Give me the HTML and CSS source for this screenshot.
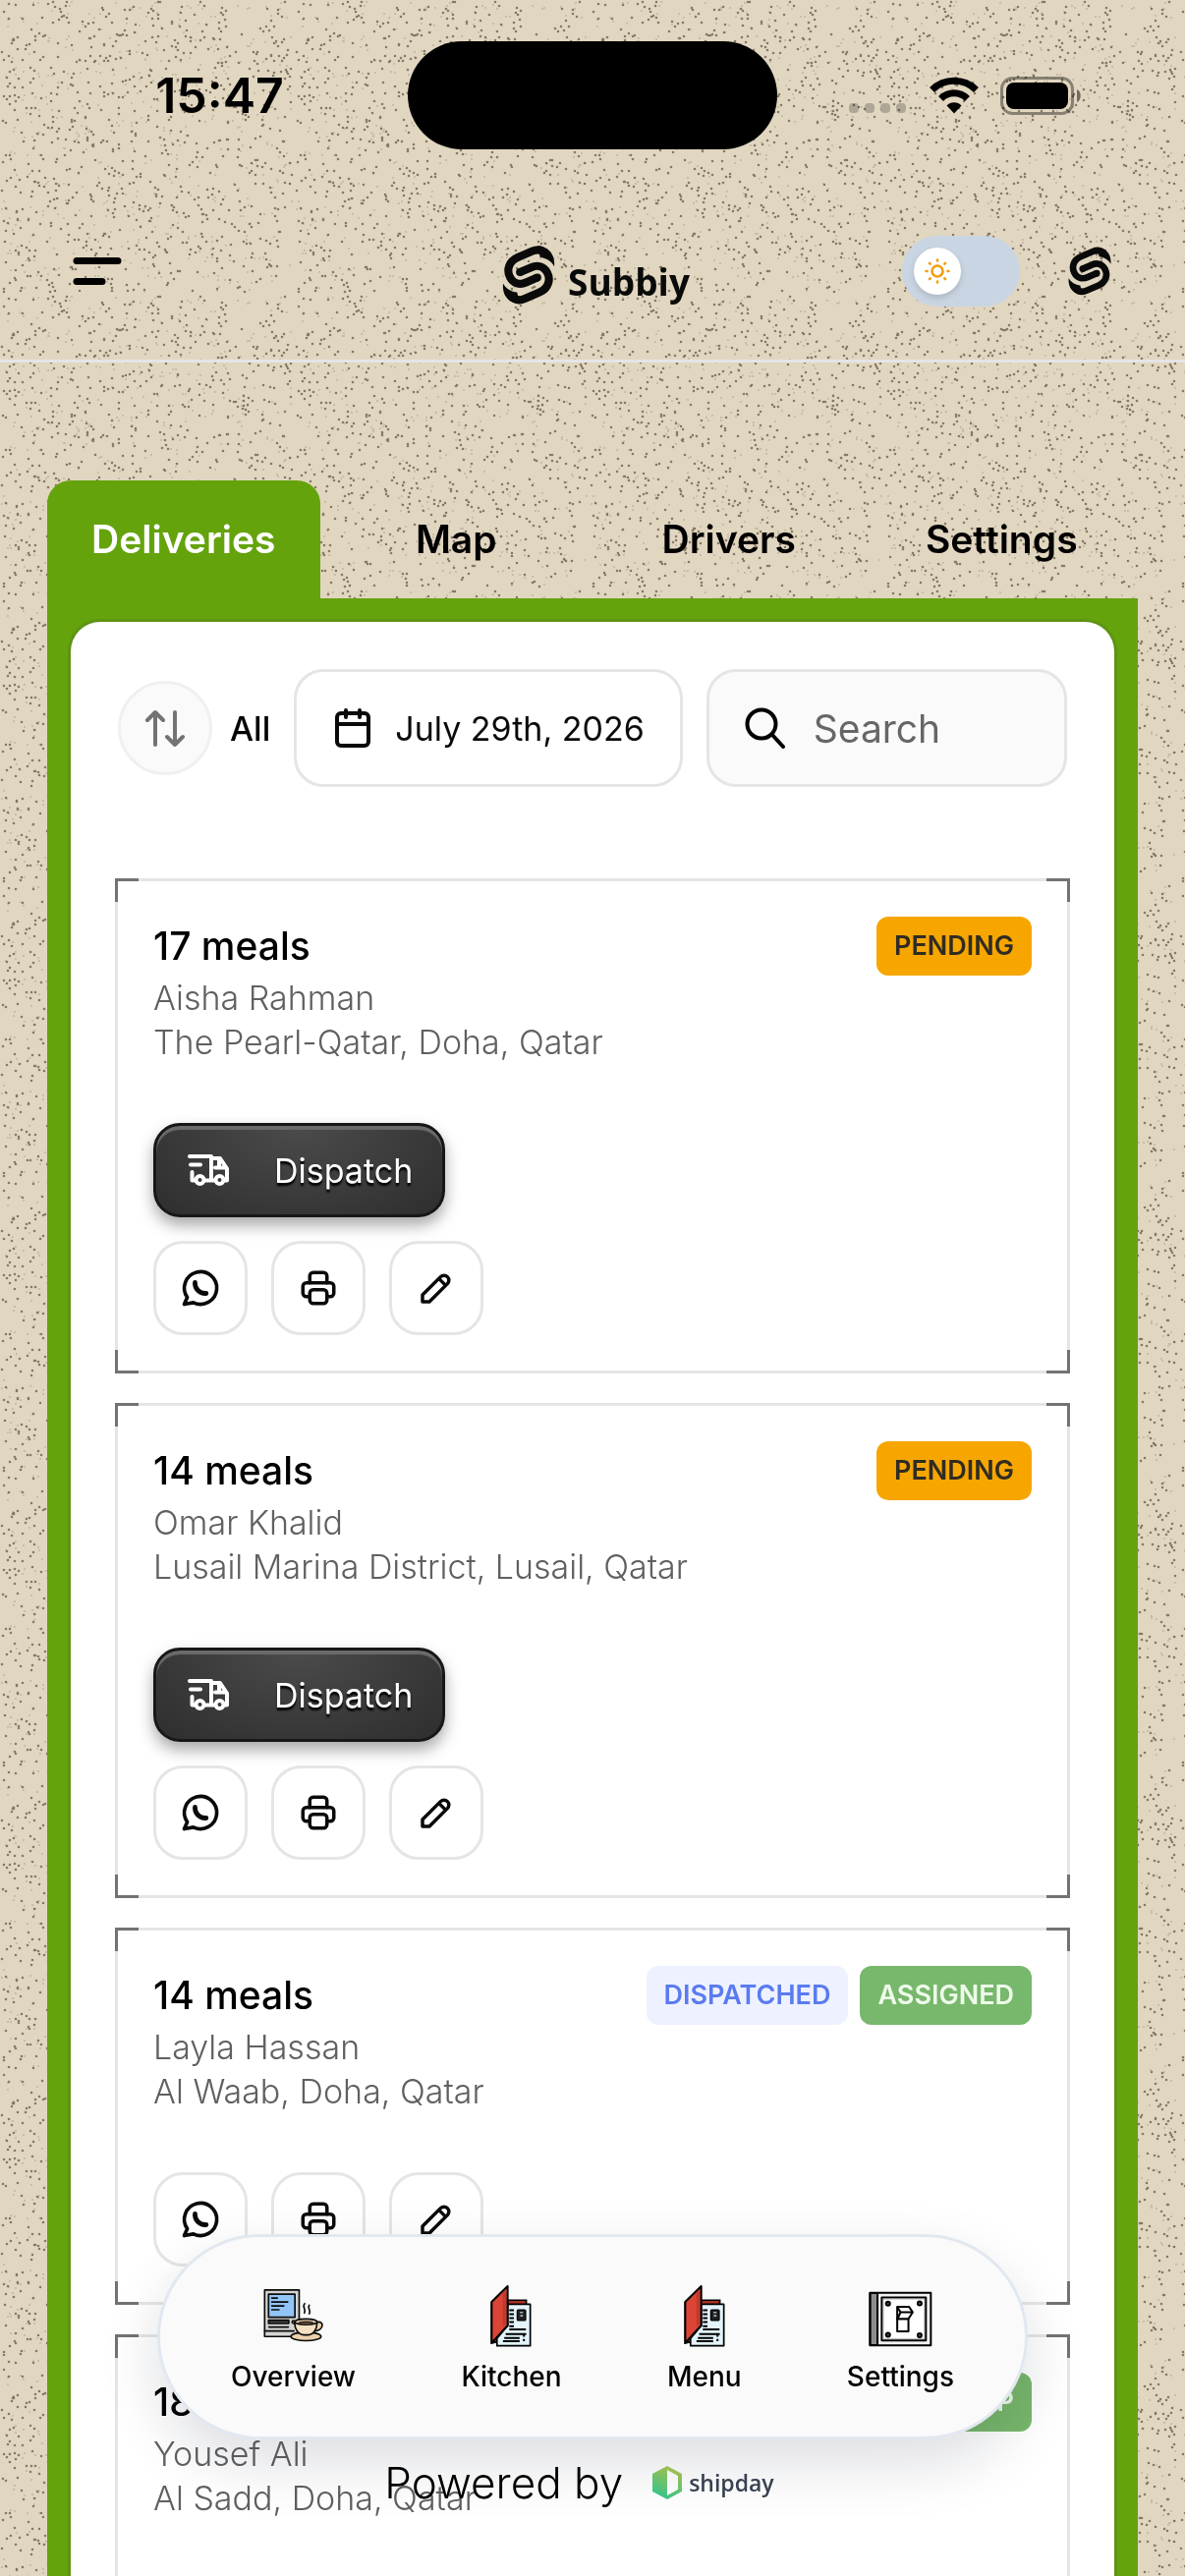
FILE: index.html
```html
<!DOCTYPE html>
<html lang="en">
<head>
<meta charset="utf-8">
<meta name="viewport" content="width=device-width, initial-scale=1">
<title>Subbiy – Deliveries</title>
<link rel="stylesheet" href="styles.css">
</head>
<body>
<svg class="sprite" width="0" height="0" aria-hidden="true">
  <defs>
    <symbol id="logo" viewBox="26 56 172 190">
      <g fill="#0a0a0a" stroke="#0a0a0a">
        <g id="logo-half">
          <path fill="none" stroke-width="25" stroke-linejoin="round" d="M167 84C155 72 140 69 124 76L78 96C50 108 42 136 54 158C64 177 84 183 104 174L139 159"/>
          <circle cx="139" cy="159" r="12.500" stroke="none"/>
          <path stroke="none" d="M140 60C172 62 196 84 192 124C184 108 166 98 148 96z"/>
        </g>
        <use href="#logo-half" transform="rotate(180 112 150.500)"/>
      </g>
    </symbol>
    <symbol id="i-whatsapp" viewBox="0 0 24 24">
      <path d="M3 21l1.700-3.800a9 9 0 1 1 3.400 2.900L3 21" />
      <path d="M9 9.500C9 12.500 11.500 15 14.600 15M9 9v1.200M14.600 15h.600" stroke-width="2.600"/>
    </symbol>
    <symbol id="i-printer" viewBox="0 0 24 24">
      <path d="M17 17h2a2 2 0 0 0 2-2v-4a2 2 0 0 0-2-2H5a2 2 0 0 0-2 2v4a2 2 0 0 0 2 2h2"/>
      <path d="M17 9V5a2 2 0 0 0-2-2H9a2 2 0 0 0-2 2v4"/>
      <rect x="7" y="13" width="10" height="8" rx="2"/>
    </symbol>
    <symbol id="i-pencil" viewBox="0 0 24 24">
      <path d="M4 20h4L18.500 9.500a2.828 2.828 0 1 0-4-4L4 16v4M13.500 6.500l4 4"/>
    </symbol>
    <symbol id="i-truck" viewBox="0 0 43 32">
      <path d="M2 2h22v24.500M24 4h9l7 10.500v12h-2.500M27.500 26.500H17M8 26.500H4.500V18M3 10.500h10M28 13.500h10"/>
      <circle cx="12.500" cy="26" r="4"/><circle cx="32.500" cy="26" r="4"/>
      <path d="M32 4v8"/>
    </symbol>
    <symbol id="i-book" viewBox="0 0 124 186">
      <path d="M40 45h68v20H40z" fill="#a83228" stroke="#000" stroke-width="5"/>
      <path d="M4 50v124l18-4z" fill="#a83228" stroke="#000" stroke-width="5"/>
      <path d="M52 57h68v125H20v-22l32-38z" fill="#e3f4fa" stroke="#000" stroke-width="5" stroke-linejoin="round"/>
      <path d="M4 50L52 3v118L4 174z" fill="#da4535" stroke="#000" stroke-width="6" stroke-linejoin="round"/>
      <path d="M46 14v102l-8 9V22z" fill="#bd3a2c"/>
      <path d="M57 75h14M57 87h14M57 99h14M57 111h14M57 123h14M57 133h50M46 147h62M42 159h46M38 168h50M101 147v8M101 162v6" fill="none" stroke="#000" stroke-width="6"/>
      <rect x="81" y="74" width="25" height="32" rx="3" fill="#222" stroke="#000" stroke-width="4"/>
      <path d="M89 82h9M90 92h8" stroke="#9fb9c4" stroke-width="5"/>
    </symbol>
    <symbol id="i-computer" viewBox="115 70 187 164">
      <g stroke="#0a0a0a" stroke-width="5" stroke-linejoin="round" stroke-linecap="round">
        <rect x="119" y="73" width="106" height="143" fill="#d3d3d1"/>
        <rect x="131" y="86" width="81" height="71" fill="#92c5f7"/>
        <path d="M119 199h90M132 187h60" fill="none"/>
        <rect x="131" y="166" width="62" height="10" fill="#444"/>
        <path d="M141 98h17M141 110h49M141 122h37M141 134h22" fill="none"/>
        <ellipse cx="246" cy="216" rx="46" ry="13" fill="#edd0ac"/>
        <path d="M280 172c22-6 22 24-6 27" fill="#edd0ac"/>
        <path d="M212 170c-8-8-14 6-2 6" fill="#d3d3d1"/>
        <path d="M211 172c0 22 12 39 28 39h14c16 0 27-17 27-39" fill="#f6e0c2"/>
        <ellipse cx="246" cy="171" rx="34" ry="9" fill="#f6e0c2"/>
        <ellipse cx="246" cy="173" rx="24" ry="5" fill="#4a3424" stroke="none"/>
        <path d="M242 115c-10 10 6 16-1 29M256 120c-8 9 7 15 0 26" fill="none"/>
      </g>
    </symbol>
    <symbol id="i-switch" viewBox="858 246 194 170">
      <g stroke="#000" stroke-width="6" stroke-linejoin="round">
        <rect x="862" y="251" width="185" height="160" fill="#f2f2f2"/>
        <path d="M863 252h22v158h-22z" fill="#8d8d8d"/>
        <rect x="898" y="265" width="134" height="131" fill="#fff"/>
        <rect x="903" y="270" width="124" height="121" fill="none" stroke="#999" stroke-width="2"/>
        <circle cx="917" cy="284" r="6" fill="#555"/><circle cx="1013" cy="283" r="6" fill="#555"/>
        <circle cx="917" cy="379" r="6" fill="#555"/><circle cx="1013" cy="380" r="6" fill="#555"/>
        <path d="M945 330h34v38h-34z" fill="#fff"/>
        <path d="M945 330v-36h36l11 16-13 20z" fill="#fff"/>
        <path d="M945 294l10 16h37M955 310l-9 20" fill="none"/>
      </g>
    </symbol>
  </defs>
</svg>
<svg class="speckle" aria-hidden="true">
  <defs><pattern id="grain" width="300" height="300" patternUnits="userSpaceOnUse"></pattern></defs>
  <rect width="100%" height="100%" fill="url(#grain)"/>
</svg>

<div class="app">
  <div class="status">
    <div class="status-time">15:47</div>
    <div class="island"></div>
    <div class="status-icons">
      <svg width="60" height="38" viewBox="0 0 60 38" aria-hidden="true">
        <g fill="#000" fill-opacity=".22"><rect x="0" y="27" width="10" height="10" rx="4"/><rect x="16" y="27" width="10" height="10" rx="4"/><rect x="32" y="27" width="10" height="10" rx="4"/><rect x="48" y="27" width="10" height="10" rx="4"/></g>
      </svg>
      <svg width="50" height="38" viewBox="0 0 50 38" aria-hidden="true">
        <g fill="none" stroke="#000" stroke-width="7">
          <path d="M2.500 13.500a32 32 0 0 1 45 0"/><path d="M11.500 22.500a19 19 0 0 1 27 0"/>
        </g>
        <path d="M25 37.500l-7.500-8a10.500 10.500 0 0 1 15 0z"/>
      </svg>
      <svg width="83" height="39" viewBox="0 0 83 39" aria-hidden="true">
        <rect x="1.500" y="1.500" width="72" height="36" rx="11" fill="none" stroke="#000" stroke-opacity=".4" stroke-width="3"/>
        <rect x="6" y="6" width="63" height="27" rx="8"/>
        <path d="M78 13c5 2 5 11 0 13z" fill-opacity=".5"/>
      </svg>
    </div>
  </div>

  <header class="topbar">
    <button class="menu-btn" type="button" aria-label="Menu">
      <svg width="50" height="28" viewBox="0 0 50 28"><path d="M4 3.500h42M4 24.500h26" stroke="#000" stroke-width="7" stroke-linecap="round"/></svg>
    </button>
    <a class="brand" href="#home"><svg width="56" height="62"><use href="#logo"/></svg><span>Subbiy</span></a>
    <div class="topbar-right">
      <label class="theme">
        <input type="checkbox" aria-label="Dark mode">
        <span class="thumb">
          <svg width="26" height="26" viewBox="0 0 26 26" fill="none" stroke="#f59e0b" stroke-width="2.600" stroke-linecap="round"><circle cx="13" cy="13" r="5.500"/><path d="M13 1.500v1M13 23.500v1M1.500 13h1M23.500 13h1M5 5l.700.700M20.300 20.300l.700.700M5 21l.700-.700M20.300 5.700l.700-.700"/></svg>
        </span>
      </label>
      <svg width="46" height="52" aria-hidden="true"><use href="#logo"/></svg>
    </div>
  </header>

  <main class="main">
    <nav class="tabs">
      <a class="tab active" href="#deliveries">Deliveries</a>
      <a class="tab" href="#map">Map</a>
      <a class="tab" href="#drivers">Drivers</a>
      <a class="tab" href="#tab-settings">Settings</a>
    </nav>
    <section class="frame">
      <div class="panel">
        <div class="toolbar">
          <button class="sort" type="button" aria-label="Sort">
            <svg width="42" height="38" viewBox="0 0 42 38" fill="none" stroke="#737373" stroke-width="4" stroke-linecap="round" stroke-linejoin="round"><path d="M11 36V3M3 11l8-8 8 8M31 3v33M23 28l8 8 8-8"/></svg>
          </button>
          <span class="all">All</span>
          <button class="date" type="button">
            <svg width="36" height="40" viewBox="0 0 36 40" fill="none" stroke="#0a0a0a" stroke-width="4" stroke-linecap="round" stroke-linejoin="round"><rect x="2" y="5" width="32" height="33" rx="4"/><path d="M2 16h32M11 2v7M25 2v7"/></svg>
            <span>July 29th, 2026</span>
          </button>
          <label class="search">
            <svg width="42" height="42" viewBox="0 0 42 42" fill="none" stroke="#000" stroke-width="4" stroke-linecap="round"><circle cx="17" cy="17" r="14.500"/><path d="M28 28l11 12"/></svg>
            <input type="text" placeholder="Search" aria-label="Search">
          </label>
        </div>

        <div class="cards">
          <article class="card">
            <div class="corners"></div>
            <div class="card-head"><h2>17 meals</h2><div class="badges"><span class="badge pending">PENDING</span></div></div>
            <p>Aisha Rahman</p>
            <p>The Pearl-Qatar, Doha, Qatar</p>
            <div class="actions">
              <button class="dispatch" type="button"><svg width="43" height="32"><use href="#i-truck"/></svg><span>Dispatch</span></button>
              <div class="icon-row">
                <button class="icon-btn" type="button" aria-label="WhatsApp"><svg width="44" height="44"><use href="#i-whatsapp"/></svg></button>
                <button class="icon-btn" type="button" aria-label="Print"><svg width="42" height="42"><use href="#i-printer"/></svg></button>
                <button class="icon-btn" type="button" aria-label="Edit"><svg width="42" height="42"><use href="#i-pencil"/></svg></button>
              </div>
            </div>
          </article>
          <article class="card">
            <div class="corners"></div>
            <div class="card-head"><h2>14 meals</h2><div class="badges"><span class="badge pending">PENDING</span></div></div>
            <p>Omar Khalid</p>
            <p>Lusail Marina District, Lusail, Qatar</p>
            <div class="actions">
              <button class="dispatch" type="button"><svg width="43" height="32"><use href="#i-truck"/></svg><span>Dispatch</span></button>
              <div class="icon-row">
                <button class="icon-btn" type="button" aria-label="WhatsApp"><svg width="44" height="44"><use href="#i-whatsapp"/></svg></button>
                <button class="icon-btn" type="button" aria-label="Print"><svg width="42" height="42"><use href="#i-printer"/></svg></button>
                <button class="icon-btn" type="button" aria-label="Edit"><svg width="42" height="42"><use href="#i-pencil"/></svg></button>
              </div>
            </div>
          </article>
          <article class="card">
            <div class="corners"></div>
            <div class="card-head"><h2>14 meals</h2><div class="badges"><span class="badge dispatched">DISPATCHED</span><span class="badge done">ASSIGNED</span></div></div>
            <p>Layla Hassan</p>
            <p>Al Waab, Doha, Qatar</p>
            <div class="actions">
              <div class="icon-row">
                <button class="icon-btn" type="button" aria-label="WhatsApp"><svg width="44" height="44"><use href="#i-whatsapp"/></svg></button>
                <button class="icon-btn" type="button" aria-label="Print"><svg width="42" height="42"><use href="#i-printer"/></svg></button>
                <button class="icon-btn" type="button" aria-label="Edit"><svg width="42" height="42"><use href="#i-pencil"/></svg></button>
              </div>
            </div>
          </article>
          <article class="card">
            <div class="corners"></div>
            <div class="card-head"><h2>18 meals</h2><div class="badges"><span class="badge done">PICKED UP</span></div></div>
            <p>Yousef Ali</p>
            <p>Al Sadd, Doha, Qatar</p>
            <div class="actions">
              <div class="icon-row">
                <button class="icon-btn" type="button" aria-label="WhatsApp"><svg width="44" height="44"><use href="#i-whatsapp"/></svg></button>
                <button class="icon-btn" type="button" aria-label="Print"><svg width="42" height="42"><use href="#i-printer"/></svg></button>
                <button class="icon-btn" type="button" aria-label="Edit"><svg width="42" height="42"><use href="#i-pencil"/></svg></button>
              </div>
            </div>
          </article>
        </div>
      </div>
    </section>
  </main>
</div>

<div class="dock">
  <nav class="dock-nav">
    <a href="#overview"><svg width="72" height="72"><use href="#i-computer" x="5" y="7" width="62" height="56"/></svg><span>Overview</span></a>
    <a href="#kitchen"><svg width="72" height="72"><use href="#i-book" x="15" y="4" width="42" height="63"/></svg><span>Kitchen</span></a>
    <a href="#menu"><svg width="72" height="72"><use href="#i-book" x="15" y="4" width="42" height="63"/></svg><span>Menu</span></a>
    <a href="#settings"><svg width="72" height="72"><use href="#i-switch" x="4" y="10" width="65" height="57"/></svg><span>Settings</span></a>
  </nav>
  <div class="powered">
    <span>Powered by</span>
    <a class="shipday" href="#shipday">
      <svg width="30" height="34" viewBox="0 0 30 34">
        <defs><linearGradient id="ship" x1="0.700" y1="0" x2="0.300" y2="1"><stop offset="0" stop-color="#a9be4b"/><stop offset="1" stop-color="#31c48d"/></linearGradient></defs>
        <path fill="url(#ship)" fill-rule="evenodd" d="M15 0l15 8v18l-15 8L0 26V8zM15 4v26l11-6V10z"/>
      </svg>
      <span>shipday</span>
    </a>
  </div>
</div>
<script src="grain.js"></script>
</body>
</html>
```
FILE: styles.css
```css
* { box-sizing: border-box; }
body {
  margin: 0;
  background: #e1d6c0;
  color: #000;
  font-family: Inter, "Liberation Sans", sans-serif;
  font-size: 34px;
}
button, input { font: inherit; color: inherit; }
button { padding: 0; border: 0; background: none; }
a { color: inherit; text-decoration: none; }
svg { display: block; flex: none; }
h2, p { margin: 0; }
.sprite { position: absolute; }
.speckle { position: fixed; inset: 0; width: 100%; height: 100%; z-index: -1; }

.app { height: 100vh; overflow: hidden; display: flex; flex-direction: column; }

/* status bar */
.status {
  flex: none;
  display: grid;
  grid-template-columns: 1fr 376px 1fr;
  align-items: center;
  padding: 42px 32px 34px;
}
.status-time { text-align: center; font-size: 50px; font-weight: 600; line-height: 60px; }
.island { height: 110px; border-radius: 55px; background: #000; }
.status-icons { display: flex; justify-content: center; gap: 22px; }

/* header */
.topbar {
  flex: none;
  display: grid;
  grid-template-columns: 1fr auto 1fr;
  align-items: center;
  height: 183px;
  padding: 0 74px;
  border-bottom: 3px solid #e5e5e5;
}
.menu-btn { justify-self: start; }
.brand {
  display: flex;
  align-items: flex-end;
  gap: 12px;
  padding: 8px 0 0 6px;
  font: 700 37px/48px "Open Sans", sans-serif;
  color: #0a0a0a;
}
.topbar-right { display: flex; justify-content: flex-end; align-items: center; gap: 48px; }
.theme { position: relative; display: block; }
.theme input {
  display: block;
  appearance: none;
  width: 120px;
  height: 72px;
  margin: 0;
  border-radius: 36px;
  background: #cad5e3;
}
.thumb {
  position: absolute;
  top: 12px;
  left: 12px;
  display: grid;
  place-items: center;
  width: 48px;
  height: 48px;
  border-radius: 50%;
  background: #fff;
  box-shadow: 0 3px 6px rgba(0, 0, 0, .15);
}

/* tabs and panel */
.main { flex: 1; min-height: 0; display: flex; flex-direction: column; padding: 120px 48px 0; }
.tabs { flex: none; display: grid; grid-template-columns: repeat(4, 1fr); }
.tab {
  border-radius: 24px 24px 0 0;
  text-align: center;
  font-size: 39px;
  font-weight: 600;
  line-height: 120px;
}
.tab.active { background: #65a30d; color: #fff; }
.frame { flex: none; padding: 24px 24px 0; background: #65a30d; }
.panel {
  padding: 48px 45px;
  border-radius: 30px 30px 0 0;
  background: #fff;
  box-shadow: 0 0 0 3px rgba(60, 60, 60, .15);
}
.toolbar { display: flex; align-items: center; padding: 0 3px; margin-bottom: 93px; }
.sort {
  flex: none;
  display: grid;
  place-items: center;
  width: 96px;
  height: 96px;
  margin-right: 18px;
  border: 3px solid #f0f0f0;
  border-radius: 50%;
  background: #fafafa;
}
.all { margin-right: 24px; font-weight: 500; }
.date, .search {
  display: flex;
  align-items: center;
  height: 120px;
  border: 3px solid #e5e5e5;
  border-radius: 30px;
}
.date { gap: 25px; margin-right: 24px; padding: 0 36px 0 39px; background: #fff; white-space: nowrap; color: #0a0a0a; }
.search { flex: 1; min-width: 0; gap: 28px; padding: 0 24px 0 36px; background: #fafafa; }
.search input { flex: 1; min-width: 0; padding: 0; border: 0; outline: 0; background: none; font-size: 39px; }
.search input::placeholder { color: #666; opacity: 1; }

/* delivery cards */
.cards { display: grid; gap: 30px; }
.card { position: relative; padding: 36px; border: 3px solid #e5e5e5; }
.corners {
  position: absolute;
  inset: -3px;
  pointer-events: none;
  --c: linear-gradient(#737373, #737373);
  background:
    var(--c) 0 0 / 24px 3px, var(--c) 0 0 / 3px 24px,
    var(--c) 100% 0 / 24px 3px, var(--c) 100% 0 / 3px 24px,
    var(--c) 0 100% / 24px 3px, var(--c) 0 100% / 3px 24px,
    var(--c) 100% 100% / 24px 3px, var(--c) 100% 100% / 3px 24px;
  background-repeat: no-repeat;
}
.card-head { display: flex; justify-content: space-between; }
.card h2 { font-size: 39px; font-weight: 500; line-height: 60px; }
.card p { font-weight: 300; line-height: 45px; color: #606060; }
.badges { display: flex; gap: 12px; }
.badge { padding: 0 18px; border-radius: 12px; font-size: 27px; font-weight: 600; line-height: 60px; }
.pending { background: #f7a600; color: #2f2c22; }
.dispatched { background: #eef1ff; color: #5a7bf0; }
.done { background: #78b86c; color: #eefbea; }
.actions { display: grid; justify-items: start; gap: 24px; margin-top: 60px; }
.dispatch {
  display: flex;
  align-items: center;
  gap: 45px;
  height: 96px;
  padding: 0 30px 0 32px;
  border: 3px solid #171717;
  border-radius: 27px;
  background: radial-gradient(ellipse at 50% 0, #4b4b4b, #2e2e2e);
  box-shadow: inset 0 4px 1px #6b6b6b, 0 8px 16px rgba(0, 0, 0, .35);
  color: #fff;
  font-weight: 400;
  text-shadow: 0 3px 2px #000;
}
.dispatch svg { fill: none; stroke: #fff; stroke-width: 4px; stroke-linecap: round; stroke-linejoin: round; }
.icon-row { display: flex; gap: 24px; }
.icon-btn {
  display: grid;
  place-items: center;
  width: 96px;
  height: 96px;
  border: 3px solid #e5e5e5;
  border-radius: 30px;
}
.icon-btn svg { fill: none; stroke: #0a0a0a; stroke-width: 2px; stroke-linecap: round; stroke-linejoin: round; }

/* floating dock */
.dock { position: fixed; left: 0; right: 0; bottom: 0; padding: 0 160px 65px; }
.dock-nav {
  display: flex;
  justify-content: space-between;
  height: 209px;
  margin-bottom: 14px;
  padding: 45px 72px 0;
  border: 3px solid #e2e8f0;
  border-radius: 105px;
  background: #fafafa;
  box-shadow: 0 24px 60px rgba(15, 23, 42, .14);
}
.dock-nav a {
  display: flex;
  flex-direction: column;
  align-items: center;
  gap: 4px;
  font-size: 28px;
  font-weight: 500;
  line-height: 42px;
}
.powered { position: relative; display: flex; justify-content: center; align-items: center; gap: 30px; padding-right: 27px; font-size: 44px; font-weight: 300; line-height: 60px; }
.shipday { display: flex; align-items: center; gap: 7px; font: 600 23px/30px "Open Sans", sans-serif; color: #374151; }
```
FILE: grain.js
```js
// Fill the 300px background tile with evenly scattered sand-coloured specks.
(function () {
  var seed = 7;
  function rand() {
    seed = (seed * 1664525 + 1013904223) % 4294967296;
    return seed / 4294967296;
  }
  function dots(count, radius, opacity) {
    var d = '';
    for (var i = 0; i < count; i++) {
      var x = 2 + Math.floor(rand() * 296);
      var y = 2 + Math.floor(rand() * 296);
      d += 'M' + (x - radius) + ' ' + y + 'a' + radius + ' ' + radius + ' 0 1 0 ' + 2 * radius + ' 0a' + radius + ' ' + radius + ' 0 1 0 ' + -2 * radius + ' 0';
    }
    var path = document.createElementNS('http://www.w3.org/2000/svg', 'path');
    path.setAttribute('d', d);
    path.setAttribute('fill', '#5f523f');
    path.setAttribute('fill-opacity', opacity);
    document.getElementById('grain').appendChild(path);
  }
  dots(820, 1.3, 0.7);
  dots(420, 1, 0.25);
})();
```
